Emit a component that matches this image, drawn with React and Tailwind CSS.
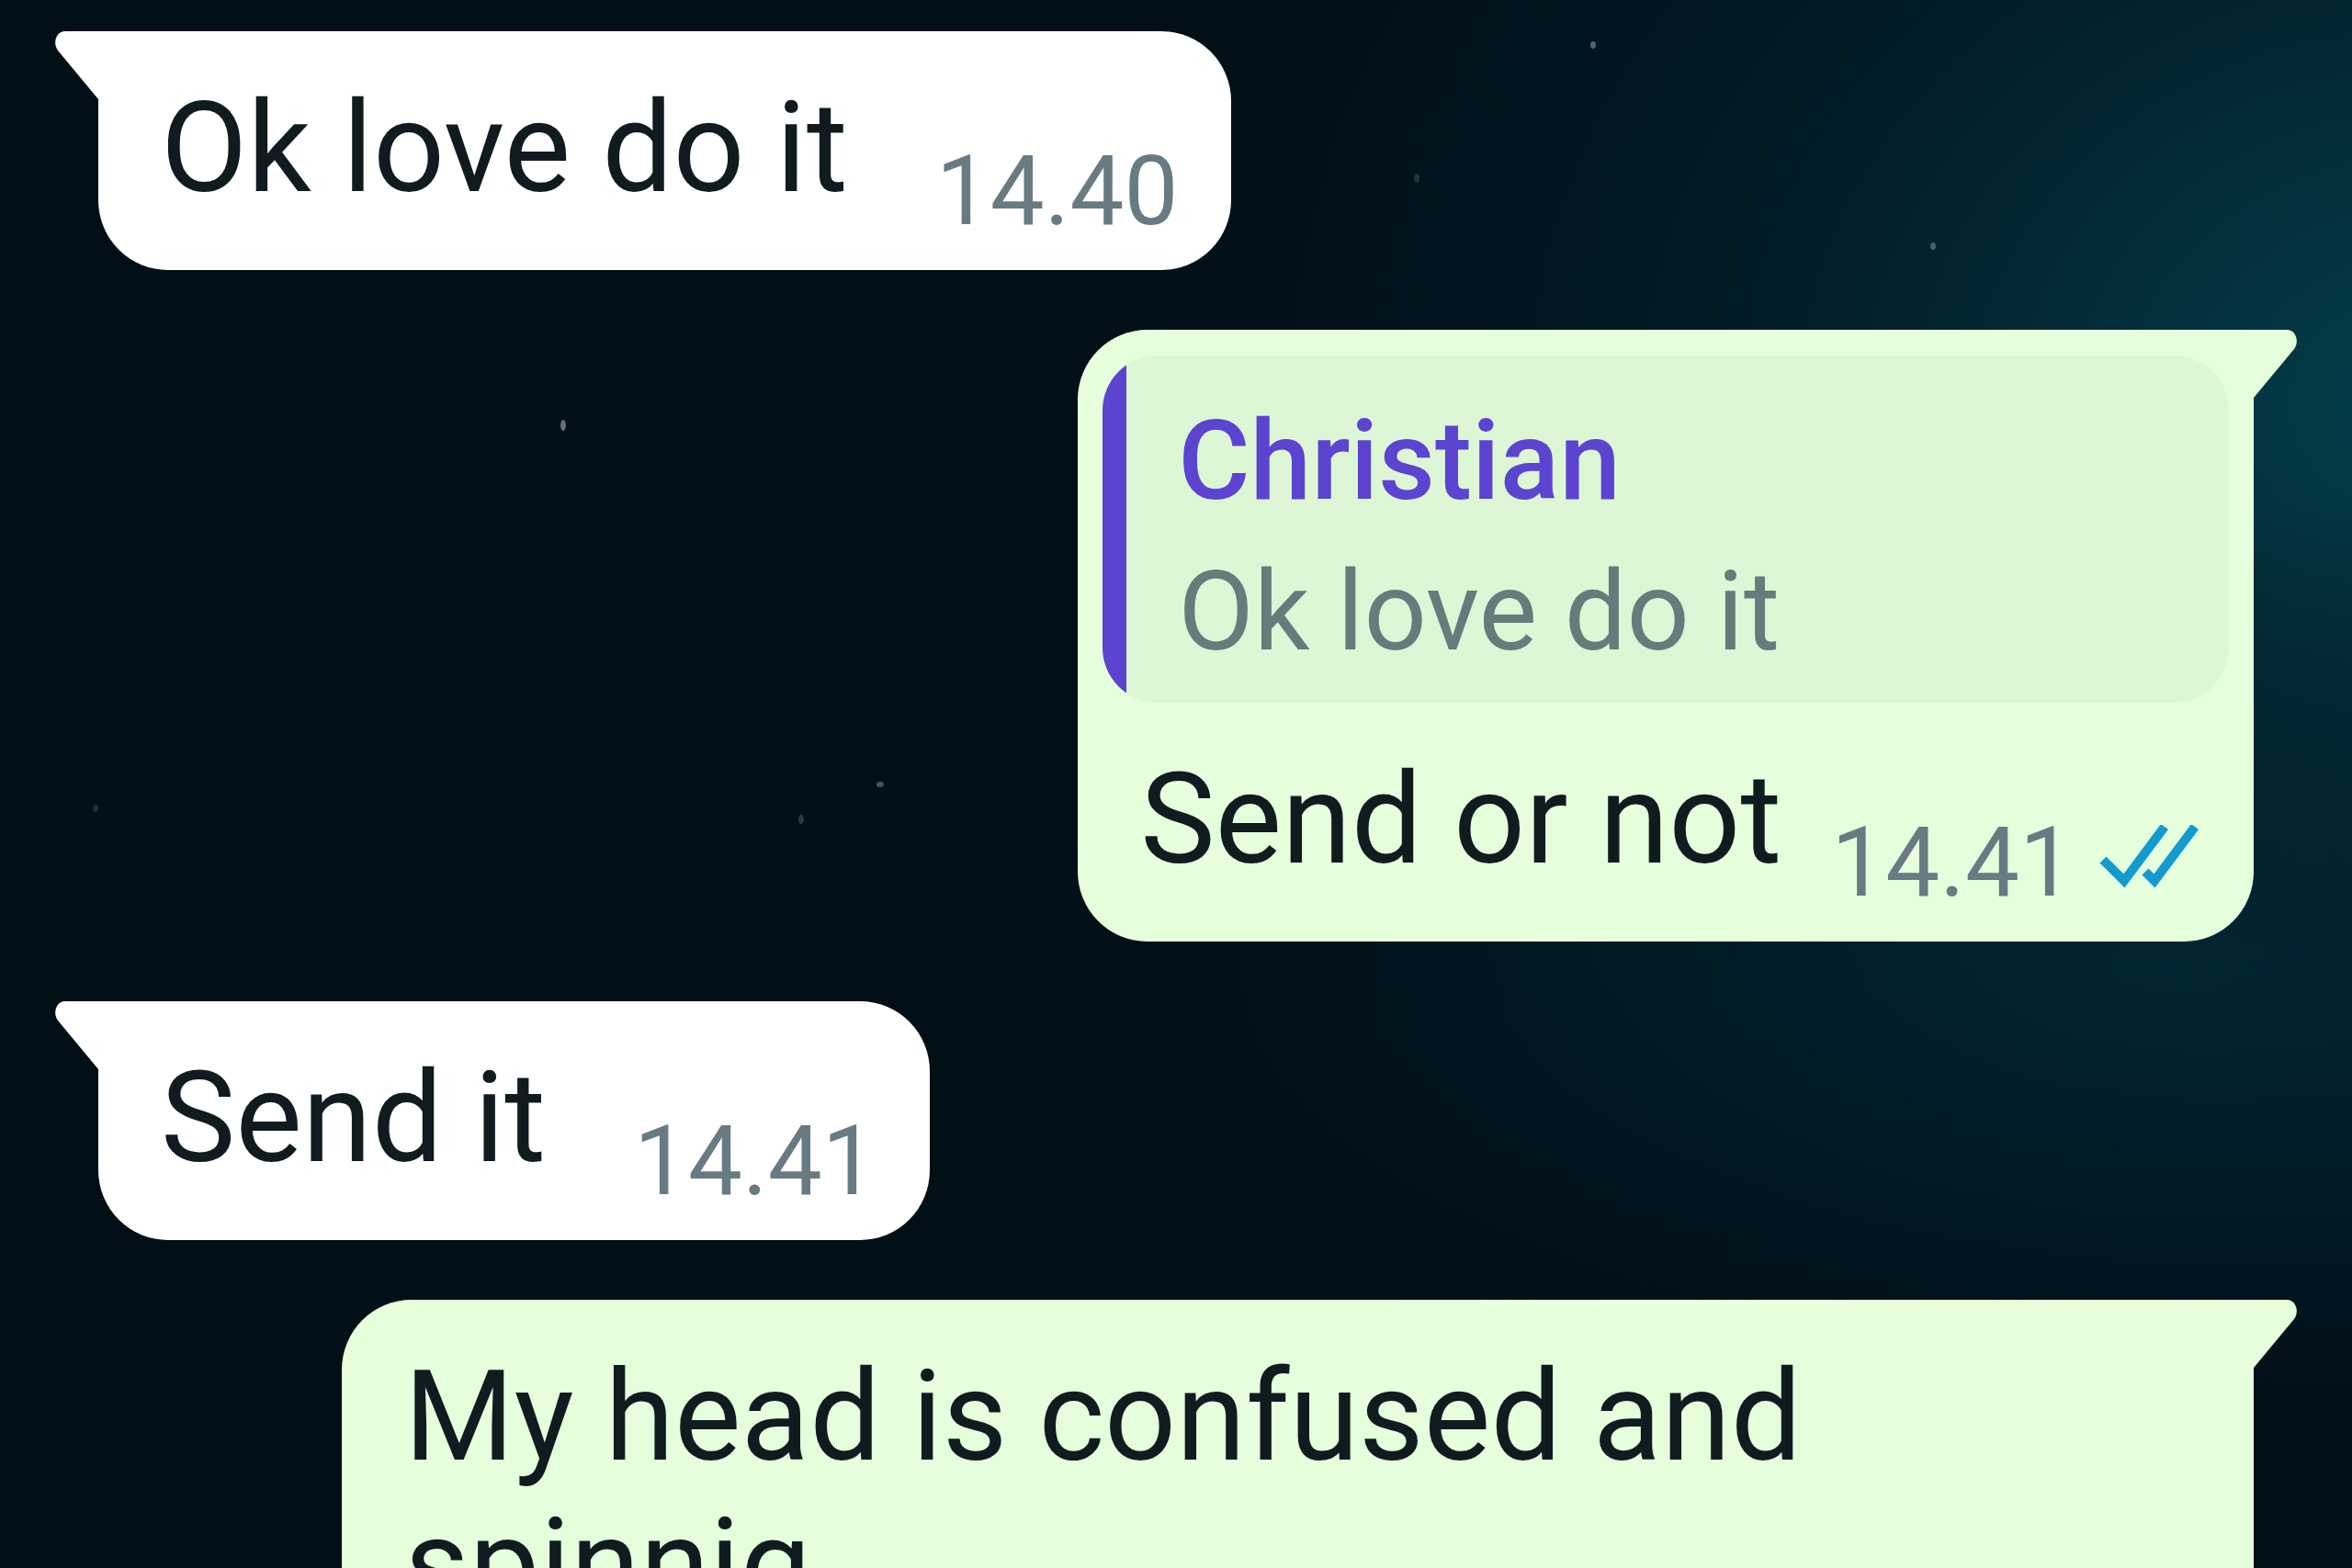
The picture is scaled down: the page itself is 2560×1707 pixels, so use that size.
const STARS = [
  [613, 463, 3, 6, 0.55],
  [958, 854, 4, 3, 0.4],
  [872, 892, 3, 5, 0.25],
  [1734, 49, 3, 4, 0.45],
  [2104, 268, 3, 4, 0.4],
  [1542, 194, 3, 5, 0.2],
  [104, 880, 3, 4, 0.18],
];

function Wallpaper() {
  return (
    <svg
      className="absolute inset-0 h-full w-full"
      viewBox="0 0 2560 1707"
      preserveAspectRatio="xMidYMid slice"
      aria-hidden="true"
    >
      <defs>
        <radialGradient id="glow" cx="0" cy="0" r="1" gradientUnits="userSpaceOnUse" gradientTransform="translate(2640 440) scale(1500 1250)">
          <stop offset="0" stopColor="#033e4c" />
          <stop offset="0.2" stopColor="#033440" stopOpacity="0.9" />
          <stop offset="0.45" stopColor="#02222e" stopOpacity="0.8" />
          <stop offset="0.75" stopColor="#011720" stopOpacity="0.5" />
          <stop offset="1" stopColor="#010f17" stopOpacity="0" />
        </radialGradient>
        <radialGradient id="haze" cx="0" cy="0" r="1" gradientUnits="userSpaceOnUse" gradientTransform="translate(2350 1060) scale(1300 520)">
          <stop offset="0" stopColor="#022c38" stopOpacity="0.6" />
          <stop offset="0.5" stopColor="#02222d" stopOpacity="0.4" />
          <stop offset="1" stopColor="#010f18" stopOpacity="0" />
        </radialGradient>
      </defs>
      <rect width="2560" height="1707" fill="#010f17" />
      <rect width="2560" height="1707" fill="url(#glow)" />
      <rect width="2560" height="1707" fill="url(#haze)" />
      {STARS.map(([x, y, rx, ry, o]) => (
        <ellipse key={x} cx={x} cy={y} rx={rx} ry={ry} fill="#a9c4c4" opacity={o} />
      ))}
    </svg>
  );
}

function Tail({ mine }) {
  return (
    <svg
      className={
        mine
          ? "absolute top-0 left-full h-[74px] w-[48px] -ml-px text-[#e5ffdc]"
          : "absolute top-0 right-full h-[74px] w-[48px] -mr-px -scale-x-100 text-white"
      }
      viewBox="0 0 48 74"
      aria-hidden="true"
    >
      <path d="M0 0H37C47 0 51 13 45 21L1 74H0Z" fill="currentColor" />
    </svg>
  );
}

function Checks() {
  return (
    <svg className="mb-[34px] h-[70px] w-[110px]" viewBox="0 0 110 70" role="img" aria-label="Read">
      <g fill="none" stroke="#129bd0" strokeWidth="10">
        <path d="M4 38L27 61L71 2" />
        <path d="M50 51L60 61L104 2" />
      </g>
    </svg>
  );
}

function Bubble({ mine, wide, children }) {
  const side = mine
    ? "self-end rounded-l-[76px] rounded-br-[76px] bg-[#e5ffdc]"
    : "self-start rounded-r-[76px] rounded-bl-[76px] bg-white";
  return (
    <article className={`relative shrink-0 ${side} ${wide ? "w-[88.7%]" : ""}`}>
      <Tail mine={mine} />
      {children}
    </article>
  );
}

function Line({ text, time, read }) {
  return (
    <div className="flex items-end justify-between pt-[47px] pr-[58px] pb-[23px] pl-[68px]">
      <p className="mb-[29px] text-[137px] leading-[161px] whitespace-pre-line text-[#101b20]">{text}</p>
      {time && (
        <div className={`flex items-end gap-[28px] ${read ? "ml-[54px]" : "ml-[96px]"}`}>
          <time className="text-[105px] leading-[124px] text-[#687a82]">{time}</time>
          {read && <Checks />}
        </div>
      )}
    </div>
  );
}

function Quote({ name, text }) {
  return (
    <div className="px-[27px] pt-[28px]">
      <blockquote className="flex overflow-hidden rounded-[60px] bg-[#ddf6d6]">
        <div className="w-[26px] shrink-0 bg-[#5b44d0]" />
        <div className="px-[56px] pt-[33px] pb-[17px]">
          <p className="text-[120px] leading-[164px] font-medium text-[#5b44d0]">{name}</p>
          <p className="text-[120px] leading-[164px] text-[#667b7b]">{text}</p>
        </div>
      </blockquote>
    </div>
  );
}

export default function App() {
  return (
    <main className="relative h-screen overflow-hidden bg-[#010f17] font-['Roboto',sans-serif]">
      <Wallpaper />
      <section className="relative flex flex-col gap-[65px] px-[107px] pt-[34px]">
        <Bubble>
          <Line text="Ok love do it" time="14.40" />
        </Bubble>
        <Bubble mine>
          <Quote name="Christian" text="Ok love do it" />
          <Line text="Send or not" time="14.41" read />
        </Bubble>
        <Bubble>
          <Line text="Send it" time="14.41" />
        </Bubble>
        <Bubble mine wide>
          <Line text={"My head is confused and\nspinnig"} />
        </Bubble>
      </section>
    </main>
  );
}
